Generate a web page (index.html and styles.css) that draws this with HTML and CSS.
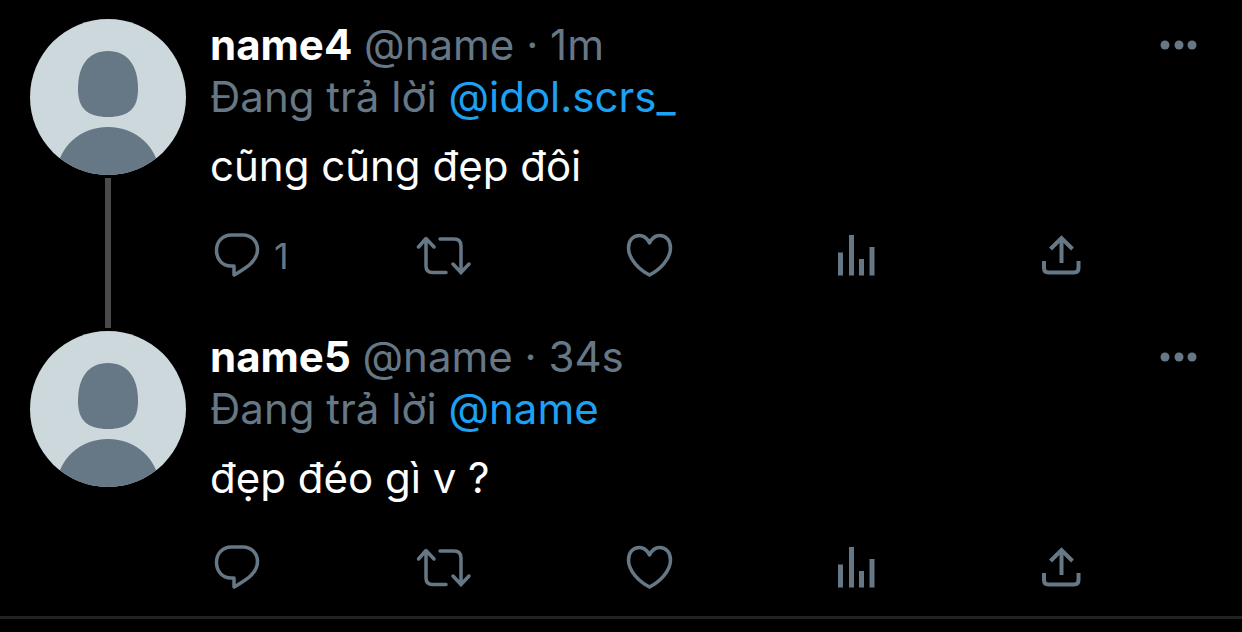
FILE: index.html
```html
<!DOCTYPE html>
<html lang="vi">
<head>
    <meta charset="UTF-8">
    <title>Thread</title>
    <link rel="stylesheet" href="styles.css">
</head>
<body>
    <!-- shared icons -->
    <svg class="sprite" aria-hidden="true">
        <symbol id="avatar" viewBox="0 0 156 156">
            <rect width="156" height="156" fill="#cdd8dc"/>
            <path d="M78 32C98 32 108 47 108 70C108 89 99 98 78 98C57 98 48 89 48 70C48 47 58 32 78 32Z" fill="#667785"/>
            <path d="M26 156C28 128 50 108 78 108C106 108 128 128 130 156Z" fill="#667785"/>
        </symbol>
        <symbol id="more" viewBox="0 0 40 12">
            <circle cx="6" cy="6" r="4.5" fill="currentColor"/>
            <circle cx="20" cy="6" r="4.5" fill="currentColor"/>
            <circle cx="33" cy="6" r="4.5" fill="currentColor"/>
        </symbol>
        <symbol id="reply" viewBox="0 0 54 48">
            <path d="M24 34V43C32 38 47.5 31 47.5 17.5C47.5 9 41 3 33 3H21.500C12.500 3 6.500 9.500 6.500 18.500C6.500 27.500 12.500 34 21 34Z"/>
        </symbol>
        <symbol id="retweet" viewBox="0 0 56 48">
            <path d="M2.5 15L10 6.5L18 15M10 7V34Q10 40.5 16.5 40.5H30M24 7H38Q45 7 45 14V41M37 32L45 40.5L53 32"/>
        </symbol>
        <symbol id="like" viewBox="0 0 54 48">
            <path d="M26.5 11C24 6 20.5 3.5 16.5 3.5C10 3.5 5.5 8.5 5.5 16C5.5 27 16 37.5 26.5 43C37 37.5 47.5 27 47.5 16C47.5 8.5 43 3.5 36.5 3.5C32.5 3.5 29 6 26.5 11Z"/>
        </symbol>
        <symbol id="stats" viewBox="0 0 54 48">
            <path class="bars" d="M9 20.5h5v23h-5zM20 3h5v40.5h-5zM30 27h5v16.5h-5zM40.5 15h5v28.5h-5z"/>
        </symbol>
        <symbol id="share" viewBox="0 0 54 48">
            <path class="thick" d="M8 29V36Q8 40.5 12.5 40.5H38Q42.5 40.5 42.5 36V29M25.5 31V6M14.5 17L25.5 6L36.5 17"/>
        </symbol>
    </svg>

    <main class="feed">
        <article class="tweet">
            <div class="side">
                <svg class="avatar"><use href="#avatar"/></svg>
                <div class="thread-line"></div>
            </div>
            <div class="content">
                <header class="top">
                    <div class="author"><strong class="name">name4</strong> @name · 1m</div>
                    <button class="more" aria-label="Xem thêm"><svg><use href="#more"/></svg></button>
                </header>
                <div class="replying">Đang trả lời <a href="#">@idol.scrs_</a></div>
                <p class="text">cũng cũng đẹp đôi</p>
                <div class="actions">
                    <button class="action" aria-label="Trả lời"><svg><use href="#reply"/></svg><span>1</span></button>
                    <button class="action" aria-label="Tweet lại"><svg class="wide"><use href="#retweet"/></svg></button>
                    <button class="action" aria-label="Thích"><svg><use href="#like"/></svg></button>
                    <button class="action" aria-label="Thống kê"><svg><use href="#stats"/></svg></button>
                    <button class="action" aria-label="Chia sẻ"><svg><use href="#share"/></svg></button>
                </div>
            </div>
        </article>

        <article class="tweet last">
            <div class="side">
                <svg class="avatar"><use href="#avatar"/></svg>
            </div>
            <div class="content">
                <header class="top">
                    <div class="author"><strong class="name">name5</strong> @name · 34s</div>
                    <button class="more" aria-label="Xem thêm"><svg><use href="#more"/></svg></button>
                </header>
                <div class="replying">Đang trả lời <a href="#">@name</a></div>
                <p class="text">đẹp đéo gì v ?</p>
                <div class="actions">
                    <button class="action" aria-label="Trả lời"><svg><use href="#reply"/></svg></button>
                    <button class="action" aria-label="Tweet lại"><svg class="wide"><use href="#retweet"/></svg></button>
                    <button class="action" aria-label="Thích"><svg><use href="#like"/></svg></button>
                    <button class="action" aria-label="Thống kê"><svg><use href="#stats"/></svg></button>
                    <button class="action" aria-label="Chia sẻ"><svg><use href="#share"/></svg></button>
                </div>
            </div>
        </article>
    </main>
</body>
</html>
```

FILE: styles.css
```css
body {
    margin: 0;
    background-color: #000;
    color: #667785;
    font-family: Inter, "Liberation Sans", sans-serif;
    font-size: 42px;
    line-height: 52px;
}

.sprite {
    display: none;
}

.feed {
    padding-top: 19px;
}

.tweet {
    display: flex;
    gap: 24px;
    padding-left: 30px;
}

.side {
    display: flex;
    flex-direction: column;
    align-items: center;
    flex: none;
}

.avatar {
    display: block;
    width: 156px;
    height: 156px;
    border-radius: 50%;
}

.thread-line {
    flex: 1;
    width: 6px;
    margin: 3px 0;
    background-color: #4a4a4a;
}

.content {
    flex: 1;
    min-width: 0;
    padding-bottom: 51px;
}

.last {
    border-bottom: 3px solid #222;
}

.last .content {
    padding-bottom: 24px;
}

.top {
    display: flex;
    justify-content: space-between;
    align-items: center;
    padding-right: 43px;
}

.name {
    color: #fff;
    font-weight: 700;
}

.replying a {
    color: #1da1f2;
    text-decoration: none;
}

.text {
    margin: 17px 0 40px;
    color: #fff;
}

button {
    padding: 0;
    border: none;
    background: none;
    color: inherit;
    font: inherit;
    cursor: pointer;
}

.more svg {
    display: block;
    width: 40px;
    height: 12px;
}

.actions {
    display: grid;
    grid-template-columns: repeat(5, 1fr);
}

.action {
    display: flex;
    align-items: center;
    gap: 10px;
    height: 48px;
    font-size: 36px;
}

.action svg {
    width: 54px;
    height: 48px;
    fill: none;
    stroke: currentColor;
    stroke-width: 3.5px;
    stroke-linecap: round;
    stroke-linejoin: round;
}

.action .wide {
    width: 56px;
}

.bars {
    fill: currentColor;
    stroke: none;
}

.thick {
    stroke-width: 4px;
    stroke-linecap: butt;
    stroke-linejoin: miter;
}
```
